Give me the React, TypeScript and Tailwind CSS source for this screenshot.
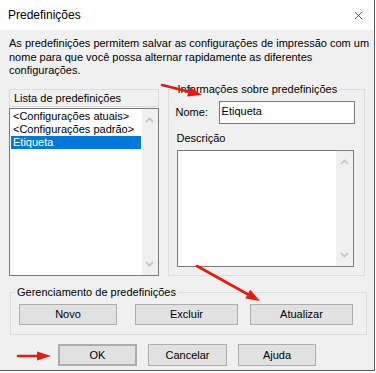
import { X } from 'lucide-react'

const font = "font-['Liberation_Sans',Arial,sans-serif]"

function Btn({ label, className }: { label: string; className: string }) {
  return (
    <div
      className={`flex items-center justify-center border border-[#adadad] bg-[#e1e1e1] text-[11px] text-black ${className}`}
    >
      {label}
    </div>
  )
}

function Chevron({ up }: { up?: boolean }) {
  return (
    <svg width="9" height="6" viewBox="0 0 9 6" className="block">
      <path
        d={up ? 'M1 5 L4.5 1.5 L8 5' : 'M1 1 L4.5 4.5 L8 1'}
        fill="none"
        stroke="#c2c2c2"
        strokeWidth="1.6"
      />
    </svg>
  )
}

function Scrollbar({ width }: { width: string }) {
  return (
    <div className={`flex h-full flex-col items-center justify-between bg-[#f0f0f0] py-[8px] ${width}`}>
      <Chevron up />
      <Chevron />
    </div>
  )
}

function Arrows() {
  return (
    <svg className="pointer-events-none absolute inset-0" width="376" height="373">
      <g stroke="#e8190f" strokeWidth="2.6" strokeLinecap="round" fill="#e8190f">
        <line x1="162" y1="85" x2="190" y2="92" />
        <line x1="197" y1="266" x2="249" y2="295" />
        <line x1="18" y1="356" x2="38" y2="356" />
      </g>
      <g fill="#e8190f">
        <polygon points="202,95 187.2,96.5 189.6,86.8" />
        <polygon points="260,301 245.3,298.6 250.2,289.8" />
        <polygon points="51,356 37,351.5 37,360.5" />
      </g>
    </svg>
  )
}

export default function App() {
  const items = ['<Configurações atuais>', '<Configurações padrão>']

  return (
    <div className={`h-[373px] w-[376px] bg-white text-black ${font}`}>
      <div className="relative h-[371px] w-[375px] border-r border-b border-[#5b5b5b]">
        {/* title bar */}
        <div className="flex h-[30px] items-center justify-between bg-white pl-[8px] pr-[9px]">
          <span className="text-[12px]">Predefinições</span>
          <X size={13} strokeWidth={1.2} className="text-black" />
        </div>

        <div className="h-[340px] bg-[#f0f0f0] px-[9px] pt-[7px]">
          <p className="h-[45px] whitespace-nowrap text-[11px] leading-[13.5px]">
            As predefinições permitem salvar as configurações de impressão com um
            <br />
            nome para que você possa alternar rapidamente as diferentes
            <br />
            configurações.
          </p>

          <div className="flex">
            {/* preset list */}
            <div className="w-[150px] pt-[7px]">
              <div className="flex h-[18px] items-center border border-[#dcdcdc] pl-[4px] text-[11px]">
                Lista de predefinições
              </div>
              <div className="mt-[1px] flex h-[168px] border border-[#7a7a7a] bg-white">
                <div className="flex-1 whitespace-nowrap pt-[1px] text-[11px]">
                  {items.map((item) => (
                    <div key={item} className="mx-[1px] h-[13px] pl-[2px] leading-[13px]">
                      {item}
                    </div>
                  ))}
                  <div className="mx-[1px] h-[13px] bg-[#0078d7] pl-[2px] leading-[13px] text-white">
                    Etiqueta
                  </div>
                </div>
                <Scrollbar width="w-[16px]" />
              </div>
            </div>

            {/* info group */}
            <fieldset className="ml-[9px] h-[194px] w-[198px] border border-[#dcdcdc]">
              <legend className="ml-[7px] px-[2px] text-[11px] leading-[14px]">
                Informações sobre predefinições
              </legend>
              <div className="pl-[7px] pt-[5px]">
                <div className="flex items-center text-[11px]">
                  <span className="w-[43px]">Nome:</span>
                  <div className="flex h-[23px] w-[136px] items-center border border-[#7a7a7a] bg-white pb-[2px] pl-[2px]">
                    Etiqueta
                  </div>
                </div>
                <div className="mt-[7px] h-[14px] pl-[1px] text-[11px] leading-[14px]">Descrição</div>
                <div className="ml-[1px] mt-[5px] flex h-[117px] w-[177px] justify-end border border-[#7a7a7a] bg-white">
                  <Scrollbar width="w-[17px]" />
                </div>
              </div>
            </fieldset>
          </div>

          {/* management group */}
          <fieldset className="ml-[1px] mt-[9px] h-[50px] w-[357px] border border-[#dcdcdc]">
            <legend className="ml-[4px] px-[2px] text-[11px] leading-[14px]">
              Gerenciamento de predefinições
            </legend>
            <div className="flex pl-[8px] pt-[5px]">
              <Btn label="Novo" className="h-[21px] w-[98px]" />
              <Btn label="Excluir" className="ml-[18px] h-[21px] w-[103px]" />
              <Btn label="Atualizar" className="ml-[12px] h-[21px] w-[103px]" />
            </div>
          </fieldset>

          <div className="mt-[9px] flex pl-[49px]">
            <Btn label="OK" className="h-[22px] w-[79px] border-2 border-[#0078d7]" />
            <Btn label="Cancelar" className="ml-[11px] h-[22px] w-[79px]" />
            <Btn label="Ajuda" className="ml-[11px] h-[22px] w-[78px]" />
          </div>
        </div>

        <Arrows />
      </div>
    </div>
  )
}
